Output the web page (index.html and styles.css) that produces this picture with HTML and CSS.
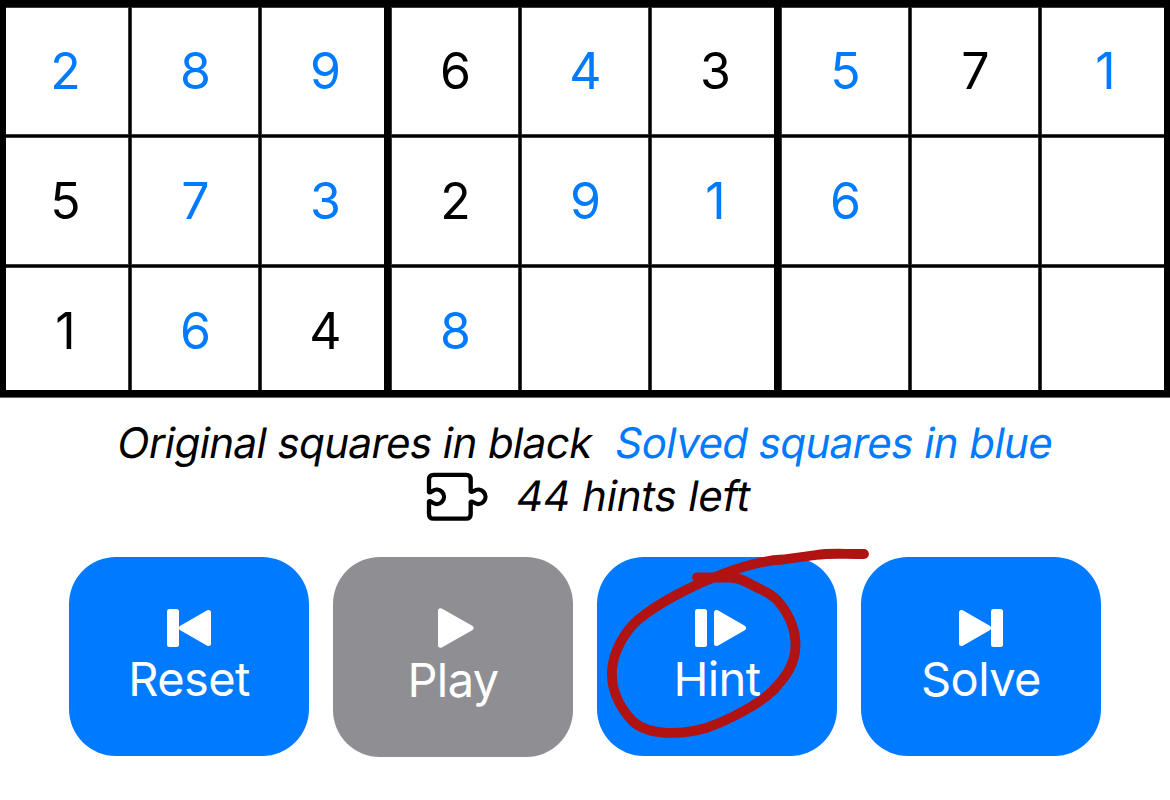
FILE: index.html
```html
<!DOCTYPE html>
<html lang="en">
<head>
<meta charset="utf-8">
<title>Sudoku Solver</title>
<link rel="stylesheet" href="styles.css">
</head>
<body>
<main class="app">
  <section class="board">
    <div class="cell solved">2</div><div class="cell solved">8</div><div class="cell solved">9</div>
    <div class="cell">6</div><div class="cell solved">4</div><div class="cell">3</div>
    <div class="cell solved">5</div><div class="cell">7</div><div class="cell solved">1</div>
    <div class="cell">5</div><div class="cell solved">7</div><div class="cell solved">3</div>
    <div class="cell">2</div><div class="cell solved">9</div><div class="cell solved">1</div>
    <div class="cell solved">6</div><div class="cell"></div><div class="cell"></div>
    <div class="cell last">1</div><div class="cell solved last">6</div><div class="cell last">4</div>
    <div class="cell solved last">8</div><div class="cell last"></div><div class="cell last"></div>
    <div class="cell last"></div><div class="cell last"></div><div class="cell last"></div>
  </section>
  <p class="legend"><span class="legend-original"><span class="slant">Original squares in black</span></span><span class="legend-solved"><span class="slant">Solved squares in blue</span></span></p>
  <p class="hints">
    <svg class="puzzle" width="64" height="52" viewBox="425 471 64 52"><path d="M429 492V479.500Q429 474.800 433.700 474.800H466Q470.700 474.800 470.700 479.500V491.500C471.500 492.500 473 491.500 474 491A7.200 7.200 0 1 1 474 502.600C473 502 471.500 501 470.700 502V514Q470.700 518.700 466 518.700H433.700Q429 518.700 429 514V501.500C430 500.500 431.500 502 432.500 502.600A7.200 7.200 0 1 0 432.500 491C431.500 491.500 430 493 429 492Z"/></svg>
    <span class="hints-text slant">44 hints left</span>
  </p>
  <nav class="controls">
    <button class="control">
      <svg class="icon" width="60" height="44" viewBox="0 0 60 44"><rect x="8" y="3" width="12" height="38" rx="2.500"/><path class="tri" d="M49.500 6.500V37.500L22.500 22Z"/></svg>
      <span class="label">Reset</span>
    </button>
    <button class="control play">
      <svg class="icon" width="60" height="44" viewBox="0 0 60 44"><path class="tri" d="M17.500 4.800V39.200L48 22Z"/></svg>
      <span class="label">Play</span>
    </button>
    <button class="control marked">
      <svg class="icon" width="60" height="44" viewBox="0 0 60 44"><rect x="8" y="3" width="12" height="38" rx="2.500"/><path class="tri" d="M29.500 6.500V37.500L56.500 22Z"/></svg>
      <span class="label">Hint</span>
      <svg class="marker" width="280" height="200" viewBox="597 545 280 200"><path d="M697 577.500H730C741 577.500 748 583 756 587C764 591 771 593.500 777 600C788 612 796 629 795.500 646C795 665 785 678 773 690.500C758 705 727 721 706 728C682 735 649 736 633 721.500C620 708 611 690 612 671C613 652 624 632 639 619C660 602 693 585 720 575C746 565 768 560 783 559.500L816 555C830 552.800 840 554 864 554"/></svg>
    </button>
    <button class="control">
      <svg class="icon" width="60" height="44" viewBox="0 0 60 44"><rect x="40" y="3" width="12" height="38" rx="2.500"/><path class="tri" d="M10.500 6.500V37.500L37.500 22Z"/></svg>
      <span class="label">Solve</span>
    </button>
  </nav>
</main>
</body>
</html>
```
FILE: styles.css
```css
body {
  margin: 0;
  background: #fff;
  font-family: Inter, "Liberation Sans", sans-serif;
  color: #000;
}
.app {
  width: 1170px;
  height: 800px;
  overflow: hidden;
}
.board {
  display: grid;
  grid-template-columns: repeat(9, 130px);
  grid-auto-rows: 130px;
  border-top: 6px solid #000;
  border-bottom: 1px solid #000;
  box-shadow: 0 1px #666;
}
.cell {
  --left: 1px;
  --right: 1px;
  --bottom: 1px;
  display: flex;
  align-items: center;
  justify-content: center;
  box-sizing: border-box;
  padding-left: 1px;
  font-size: 50px;
  line-height: 60px;
  box-shadow:
    inset var(--left) 0 #000,
    inset calc(-1 * var(--right)) 0 #000,
    inset 0 1px #000,
    inset 0 calc(-1 * var(--bottom)) #000,
    inset 2px 0 #3c3c3c,
    inset -2px 0 #3c3c3c,
    inset 0 2px #3c3c3c,
    inset 0 -2px #3c3c3c;
}
.cell:nth-child(3n) { --right: 6px; }
.cell:nth-child(9n + 1) { --left: 6px; }
.last { --bottom: 6px; }
.solved { color: #007aff; }
.legend,
.hints {
  display: flex;
  margin: 0;
  font-size: 42px;
  line-height: 52px;
  white-space: pre;
}
.slant {
  display: inline-block;
  letter-spacing: -0.56px;
  transform: skewX(-10deg);
}
.legend {
  padding: 20px 0 0 118px;
}
.legend-original {
  width: 498px;
}
.legend-solved {
  color: #007aff;
}
.hints {
  align-items: flex-start;
  padding: 1px 0 0 425px;
}
.hints-text {
  margin-left: 28px;
  letter-spacing: -0.15px;
}
.puzzle {
  margin-top: 1px;
  fill: none;
  stroke: #000;
  stroke-width: 4.3;
  stroke-linejoin: round;
}
.controls {
  display: flex;
  align-items: flex-start;
  gap: 24px;
  padding: 34px 69px 0;
}
.control {
  position: relative;
  display: flex;
  flex-direction: column;
  align-items: center;
  box-sizing: border-box;
  width: 240px;
  height: 199px;
  padding: 49px 0 0;
  border: 0;
  border-radius: 47px;
  background: #007aff;
  color: #fff;
  font-family: inherit;
}
.play {
  height: 200px;
  background: #8e8e93;
}
.play .label { margin-top: 1px; }
.icon {
  display: block;
  fill: #fff;
}
.tri {
  stroke: #fff;
  stroke-width: 5;
  stroke-linejoin: round;
}
.label {
  font-size: 47px;
  line-height: 58px;
  font-weight: 400;
  letter-spacing: -0.6px;
}
.marked { z-index: 1; }
.marker {
  position: absolute;
  left: 0;
  top: -12px;
  fill: none;
  stroke: #b11313;
  stroke-width: 9.8;
  stroke-linecap: round;
  stroke-linejoin: round;
}
```
